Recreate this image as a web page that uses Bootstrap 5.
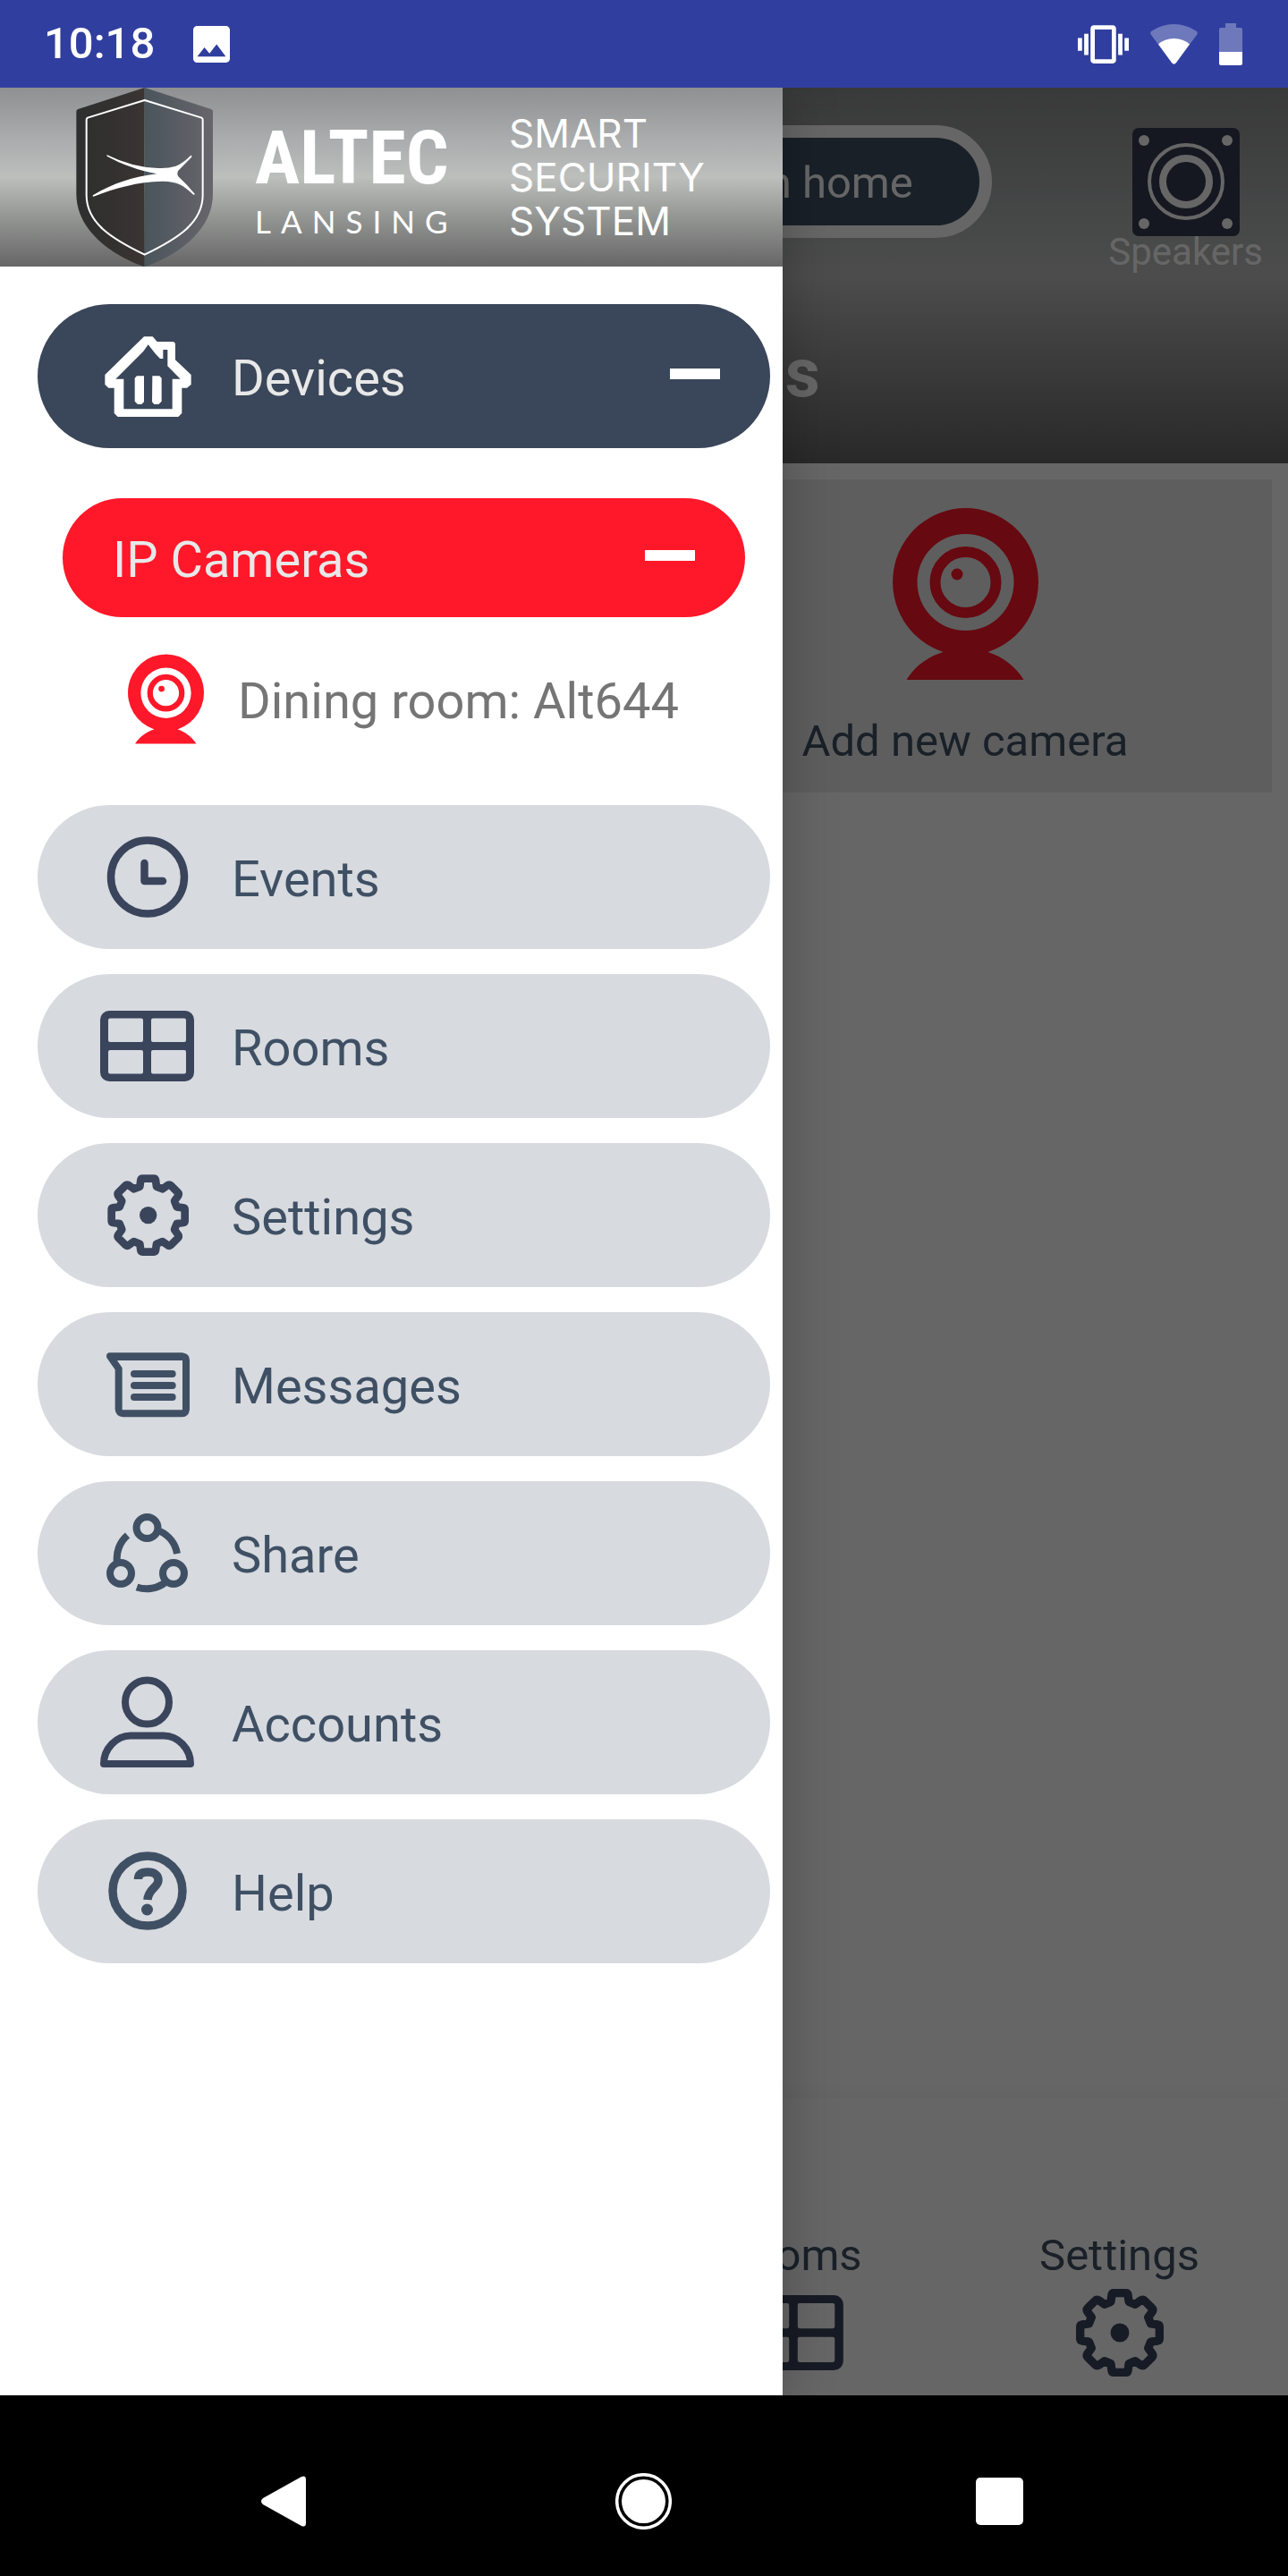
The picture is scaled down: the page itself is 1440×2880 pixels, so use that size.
<!DOCTYPE html>
<html lang="en">
<head>
<meta charset="utf-8">
<meta name="viewport" content="width=device-width, initial-scale=1">
<title>Smart Security System</title>
<link href="https://cdn.jsdelivr.net/npm/bootstrap@5.3.0/dist/css/bootstrap.min.css" rel="stylesheet">
<style>
  :root { --ink: #3f5064; --ink-icon: #3a455c; --navy: #3a4659; --red: #ff1829; --pill: #d7dadf; }
  body { font-family: Roboto, "Liberation Sans", sans-serif; background: #000; }
  svg { display: block; flex: none; }
  .steel { background: linear-gradient(#8f9091, #abadae 30%, #bdbfbd 50%, #8f918f 75%, #666); }

  .status-bar { background: #303f9f; height: 98px; padding: 0 51px 0 49px; color: #fff; }
  .clock { font-size: 49px; line-height: 58px; font-weight: 500; margin-right: 43px; }

  .stage { overflow: hidden; background: #fff; }
  .app-header { height: 420px; padding-top: 42px; color: #fff; }
  .mode-btn { width: 54%; height: 126px; border: 14px solid #fff; background: var(--ink); color: #fff; font-size: 49px; line-height: 57px; padding: 2px 74px 0; text-align: right; }
  .speakers { padding: 3px 28px 0 0; font-size: 42px; line-height: 36px; color: #fff; text-decoration: none; }
  .app-title { font-size: 76px; line-height: 90px; font-weight: 700; margin: 72px 0 0; }
  .tiles { padding: 18px; }
  .tile { background: #ebebeb; color: var(--ink); font-size: 49px; line-height: 57px; padding: 32px 0 29px; gap: 40px; text-decoration: none; }
  .tab-bar { height: 332px; padding: 0 6px 21px 0; background: #fff; box-shadow: 0 0 28px rgba(0,0,0,.06); }
  .tab-item { flex: 0 0 365px; gap: 9px; color: var(--ink); font-size: 49px; line-height: 57px; text-decoration: none; }
  .tab-icon { height: 98px; color: var(--ink-icon); }
  .scrim { background: rgba(0,0,0,.6); }

  .drawer { width: min(875px, 100%); background: #fff; box-shadow: 0 0 56px rgba(0,0,0,.25); }
  .brand { height: 200px; padding-left: 85px; color: #fff; }
  .brand-name { width: 220px; margin-left: 46px; }
  .brand-main { font: 700 84px/98px "Liberation Sans Narrow", "Roboto Condensed", Roboto, sans-serif; }
  .brand-sub { font: 400 35px/42px Lato, sans-serif; letter-spacing: 11px; }
  .brand-tag { font: 400 44px/49px Inter, sans-serif; margin-left: 64px; }
  .menu { padding: 42px 14px 0 42px; gap: 28px; }
  .pill { --bs-btn-border-width: 0; height: 161px; padding: 0 56px 0 70px; gap: 42px; font-size: 56px; line-height: 66px; text-align: left; background: var(--pill); color: var(--ink); }
  .pill svg { color: var(--ink-icon); }
  .pill.open, .pill.open svg { background: var(--navy); color: #fff; }
  .pill.open { color: #e8e8e8; }
  .pill span { padding-top: 5px; }
  .pill.group { height: 133px; margin: 28px 28px 0; padding-left: 56px; background: var(--red); color: #e8e8e8; }
  .dash { width: 56px; height: 12px; background: #fff; margin-left: auto; margin-bottom: 5px; }
  .device { height: 182px; margin-top: -28px; padding-left: 101px; gap: 38px; color: #757575; font-size: 56px; line-height: 66px; text-decoration: none; }
  .device span { padding-top: 5px; }

  .system-nav { height: 202px; padding-top: 34px; }
  .system-nav > div { width: 83.333%; }
  .system-nav button { background: none; border: 0; padding: 0; }
</style>
<script src="https://cdn.jsdelivr.net/npm/bootstrap@5.3.0/dist/js/bootstrap.bundle.min.js"></script>
</head>
<body class="min-vh-100 d-flex flex-column">

<svg width="0" height="0" class="position-absolute" aria-hidden="true">
  <symbol id="cam" viewBox="0 0 163 192">
    <path fill="#ff1829" fill-rule="evenodd" d="M81.500 0a81.500 82.500 0 0 1 25 161c16 5 31 16 40 31H15.500c9-15 24-26 41-31A81.500 82.500 0 0 1 81.500 0zM81.500 29a54 54 0 1 0 0 108a54 54 0 1 0 0-108z"/>
    <circle cx="81.500" cy="83" r="34" fill="none" stroke="#ff1829" stroke-width="12"/>
    <circle cx="72" cy="74" r="6.500" fill="#ff1829"/>
  </symbol>
  <symbol id="gear" viewBox="21 18 315 315">
    <g transform="translate(182 176)">
      <path fill="none" stroke="currentColor" stroke-width="26" stroke-linejoin="round" d="M-19-123H19Q24-123 25-118L28-96 48-88 66-101Q72-104 76-100L100-76Q104-72 101-66L88-48 96-28 118-25Q123-24 123-19V19Q123 24 118 25L96 28 88 48 101 66Q104 72 100 76L76 100Q72 104 66 101L48 88 28 96 25 118Q24 123 19 123H-19Q-24 123-25 118L-28 96-48 88-66 101Q-72 104-76 100L-100 76Q-104 72-101 66L-88 48-96 28-118 25Q-123 24-123 19V-19Q-123-24-118-25L-96-28-88-48-101-66Q-104-72-100-76L-76-100Q-72-104-66-101L-48-88-28-96-25-118Q-24-123-19-123z"/>
      <circle r="29" fill="currentColor"/>
    </g>
  </symbol>
  <symbol id="rooms" viewBox="0 13 105 79">
    <path fill="currentColor" fill-rule="evenodd" d="M10 13H95a10 10 0 0 1 10 10V82a10 10 0 0 1-10 10H10a10 10 0 0 1-10-10V23a10 10 0 0 1 10-10zM11 21.500q-2 0-2 2V46q0 2 2 2H46q2 0 2-2V23.500q0-2-2-2zM59 21.500q-2 0-2 2V46q0 2 2 2H94q2 0 2-2V23.500q0-2-2-2zM11 57q-2 0-2 2V81.500q0 2 2 2H46q2 0 2-2V59q0-2-2-2zM59 57q-2 0-2 2V81.500q0 2 2 2H94q2 0 2-2V59q0-2-2-2z"/>
  </symbol>
</svg>

<header class="status-bar d-flex align-items-center">
  <span class="clock">10:18</span>
  <svg width="41" height="41" viewBox="3 3 18 18"><path fill="#fff" d="M21 19V5c0-1.100-.9-2-2-2H5c-1.100 0-2 .9-2 2v14c0 1.100.9 2 2 2h14c1.100 0 2-.9 2-2zM8.500 13.500l2.500 3.010L14.500 12l4.500 6H5l3.500-4.500z"/></svg>
  <svg class="ms-auto" width="57" height="43" viewBox="0 3 24 18"><path fill="#fff" d="M0 15h2V9H0v6zm3 2h2V7H3v10zm19-8v6h2V9h-2zm-3 8h2V7h-2v10zM16.500 3h-9C6.670 3 6 3.670 6 4.500v15c0 .83.67 1.500 1.500 1.500h9c.83 0 1.500-.67 1.500-1.500v-15c0-.83-.67-1.500-1.500-1.500zM16 19H8V5h8v14z"/></svg>
  <svg class="ms-4" width="53" height="45" viewBox="0 0 53 45"><path fill="#fff" fill-opacity=".3" d="M1 12Q-1 9 2 7.500Q13 0 26.500 0T51 7.500Q54 9 52 12L29 43Q26.500 46 24 43z"/><path fill="#fff" d="M9 22.500Q16 16 26.500 16T44 22.500L29 43Q26.500 46 24 43z"/></svg>
  <svg class="ms-4" width="26" height="47" viewBox="0 0 26 47"><path fill="#fff" fill-opacity=".3" d="M7 0H19V5H24q2 0 2 2V32H0V7q0-2 2-2H7z"/><path fill="#fff" d="M0 32H26V45q0 2-2 2H2q-2 0-2-2z"/></svg>
</header>

<div class="stage position-relative flex-grow-1 d-flex flex-column">
  <main class="flex-grow-1 d-flex flex-column">
    <div class="app-header steel">
      <div class="d-flex align-items-start">
        <div class="flex-fill w-25"></div>
        <button type="button" class="mode-btn rounded-pill flex-shrink-0">In home</button>
        <div class="flex-fill w-25 d-flex justify-content-end">
          <a href="#" class="speakers d-flex flex-column align-items-center">
            <svg width="120" height="121" viewBox="0 0 120 121"><rect width="120" height="121" rx="7" fill="#363d50"/><g fill="#fff"><circle cx="13" cy="14" r="6"/><circle cx="106" cy="14" r="6"/><circle cx="13" cy="107" r="6"/><circle cx="106" cy="107" r="6"/></g><g fill="none" stroke="#fff"><circle cx="60" cy="60" r="41" stroke-width="4"/><circle cx="60" cy="60" r="26" stroke-width="8"/></g></svg>
            Speakers
          </a>
        </div>
      </div>
      <h1 class="app-title text-center">IP Cameras</h1>
    </div>
    <div class="tiles row g-0">
      <div class="col-6"></div>
      <div class="col-6 ps-3">
        <a href="#" class="tile d-flex flex-column align-items-center"><svg width="163" height="192"><use href="#cam"/></svg>Add new camera</a>
      </div>
    </div>
    <nav class="tab-bar mt-auto d-flex justify-content-end align-items-end">
      <a href="#" class="tab-item d-flex flex-column align-items-center">Rooms<span class="tab-icon d-flex align-items-center"><svg width="112" height="84"><use href="#rooms"/></svg></span></a>
      <a href="#" class="tab-item d-flex flex-column align-items-center">Settings<span class="tab-icon d-flex align-items-center"><svg width="98" height="98" viewBox="46 40 272 272"><use href="#gear" x="21" y="18" width="315" height="315"/></svg></span></a>
    </nav>
  </main>

  <div class="scrim position-absolute top-0 start-0 w-100 h-100"></div>

  <aside class="drawer position-absolute top-0 start-0 h-100">
    <div class="brand steel d-flex align-items-center">
      <svg width="154" height="200" viewBox="45 24 462 600">
        <defs>
          <linearGradient id="sl"><stop stop-color="#2f2f2f"/><stop offset=".5" stop-color="#323130"/><stop offset="1" stop-color="#3b3432"/></linearGradient>
          <linearGradient id="sr"><stop stop-color="#4a555c"/><stop offset="1" stop-color="#68656b"/></linearGradient>
        </defs>
        <path fill="url(#sl)" d="M275 24L52 96Q46 98 46 104V380C46 500 160 585 275 625z"/>
        <path fill="url(#sr)" d="M275 24L498 96Q504 98 504 104V380C504 500 390 585 275 625z"/>
        <path fill="none" stroke="#fff" stroke-width="6" stroke-linejoin="round" d="M275 66L466 125Q470 127 470 131V385C470 478 385 531 275 584C165 531 80 478 80 385V131Q80 127 84 125z"/>
        <path fill="#fff" d="M148 249Q235 292 320 294Q352 296 380 287Q404 277 430 251Q436 252 431 259L388 302Q382 312 388 322Q418 350 443 380Q443 386 437 382C405 350 385 339 335 338C250 340 180 360 104 389Q98 388 103 384C170 345 235 323 316 313C255 301 200 282 149 254z"/>
      </svg>
      <div class="brand-name d-flex flex-column text-nowrap">
        <span class="brand-main">ALTEC</span>
        <span class="brand-sub">LANSING</span>
      </div>
      <div class="brand-tag">SMART<br>SECURITY<br>SYSTEM</div>
    </div>

    <nav class="menu d-flex flex-column">
      <button type="button" class="btn pill open rounded-pill d-flex align-items-center" aria-expanded="true">
        <svg width="105" height="105" viewBox="21 18 315 315"><path fill="#fff" fill-rule="evenodd" d="M168 43H197L212 60H267L273 66V121L326 171V204L312 215H295V300L283 312H80L68 300V215H49L37 204V171zM182 70L166 92 73 185H100V286H263V185H290L247 142V87H232V117H222L208 103z"/><path fill="#fff" d="M144 175H168V262L160 270H147L137 260V182zM196 175H220L227 182V260L217 270H202L195 262z"/></svg>
        <span>Devices</span><i class="dash"></i>
      </button>
      <button type="button" class="btn pill group rounded-pill d-flex align-items-center" aria-expanded="true"><span>IP Cameras</span><i class="dash"></i></button>
      <a href="#" class="device d-flex align-items-center"><svg width="85" height="101"><use href="#cam"/></svg><span>Dining room: Alt644</span></a>

      <button type="button" class="btn pill rounded-pill d-flex align-items-center">
        <svg width="105" height="105" viewBox="0 0 105 105" fill="none" stroke="currentColor" stroke-width="8.500" stroke-linecap="round" stroke-linejoin="round"><circle cx="53" cy="52.500" r="41"/><path d="M49.500 37V57H70"/></svg><span>Events</span>
      </button>
      <button type="button" class="btn pill rounded-pill d-flex align-items-center"><svg width="105" height="79"><use href="#rooms"/></svg><span>Rooms</span></button>
      <button type="button" class="btn pill rounded-pill d-flex align-items-center"><svg width="105" height="105"><use href="#gear"/></svg><span>Settings</span></button>
      <button type="button" class="btn pill rounded-pill d-flex align-items-center">
        <svg width="105" height="105" viewBox="21 15 315 315"><path fill="#405064" fill-rule="evenodd" d="M50 67H296Q321 70 321 92V258Q318 282 296 283H98Q73 280 71 258V124L43 84Q39 70 50 67zM78 93L95 118V259H297V93z"/><path stroke="#405064" stroke-width="24" stroke-linecap="round" d="M135 138H263M135 177H263M135 216H263"/></svg><span>Messages</span>
      </button>
      <button type="button" class="btn pill rounded-pill d-flex align-items-center">
        <svg width="105" height="105" viewBox="0 0 105 105" fill="none" stroke="#405064" stroke-width="8"><circle cx="52.500" cy="24" r="12"/><circle cx="23" cy="75" r="12"/><circle cx="82" cy="75" r="12"/><path d="M19 63A34 34 0 0 1 30.500 32.500M67 28A34 34 0 0 1 86 53M41 90.500A34 34 0 0 0 73 85"/></svg><span>Share</span>
      </button>
      <button type="button" class="btn pill rounded-pill d-flex align-items-center">
        <svg width="105" height="105" viewBox="0 0 105 105" fill="none" stroke="currentColor" stroke-width="8" stroke-linejoin="round"><circle cx="52.500" cy="30" r="24.500"/><path d="M4 99C4 82 18 67.500 34 67.500H71C87 67.500 101 82 101 99z"/></svg><span>Accounts</span>
      </button>
      <button type="button" class="btn pill rounded-pill d-flex align-items-center">
        <svg width="105" height="105" viewBox="0 0 105 105" fill="none" stroke="#405064" stroke-width="9.500"><circle cx="53" cy="52" r="39"/><path d="M42.500 39C42.500 33 47 31 53.500 31C60 31 65 34 65 40C65 48 53.500 50 53 62"/><circle cx="52.500" cy="73" r="6.500" fill="#405064" stroke="none"/></svg><span>Help</span>
      </button>
    </nav>
  </aside>
</div>

<footer class="system-nav bg-black d-flex justify-content-center align-items-center">
  <div class="d-flex">
    <div class="col-4 d-flex justify-content-center"><button type="button" aria-label="Back"><svg width="63" height="63" viewBox="0 0 63 63"><path fill="#fff" d="M6 28L49 4Q54 2 54 7V56Q54 61 49 59L6 35Q2 31.500 6 28z"/></svg></button></div>
    <div class="col-4 d-flex justify-content-center"><button type="button" aria-label="Home"><svg width="63" height="63" viewBox="0 0 63 63"><circle cx="31.500" cy="31.500" r="29.800" fill="none" stroke="#fff" stroke-width="3.500"/><circle cx="31.500" cy="31.500" r="24.500" fill="#fff"/></svg></button></div>
    <div class="col-4 d-flex justify-content-center"><button type="button" aria-label="Recent apps"><svg width="63" height="63" viewBox="0 0 63 63"><rect x="3" y="5" width="53" height="53" rx="5" fill="#fff"/></svg></button></div>
  </div>
</footer>
</body>
</html>
